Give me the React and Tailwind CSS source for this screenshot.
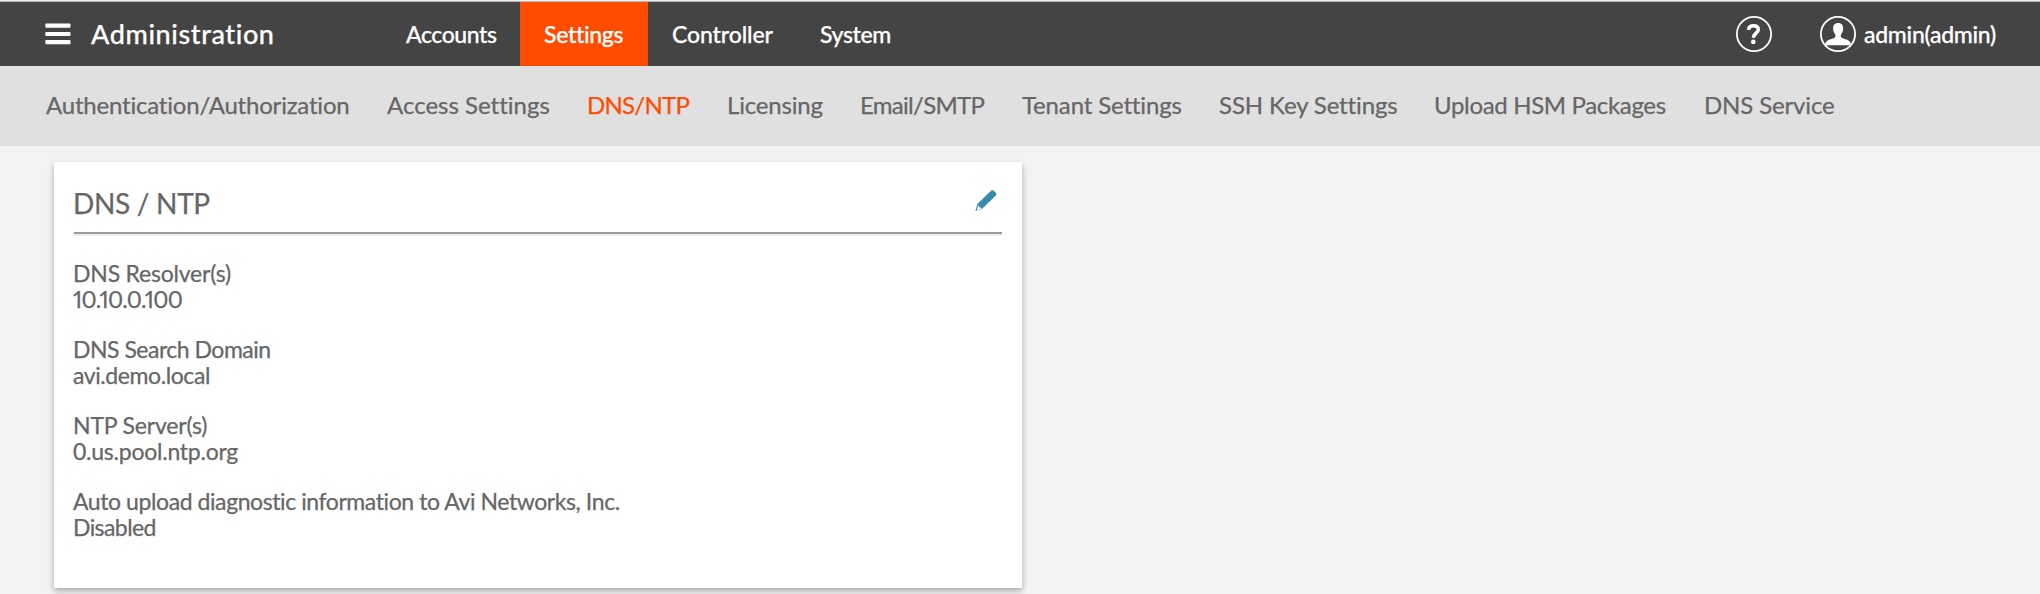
const navItems = [
  { label: "Accounts", className: "w-[138px] tracking-[-0.42px]" },
  { label: "Settings", className: "w-[128px] bg-[#ff4c00] tracking-[-0.3px]" },
  { label: "Controller", className: "w-[148px] tracking-[-0.1px]" },
  { label: "System", className: "tracking-[-0.36px]" },
];

const subNavItems = [
  { label: "Authentication/Authorization", className: "w-[341px] tracking-[-0.2px]" },
  { label: "Access Settings", className: "w-[200px] tracking-normal [font-variant-ligatures:none]" },
  { label: "DNS/NTP", className: "w-[140px] text-[#ff4c00] tracking-[-0.75px]" },
  { label: "Licensing", className: "w-[133px] tracking-[-0.18px]" },
  { label: "Email/SMTP", className: "w-[162px] tracking-[-0.72px]" },
  { label: "Tenant Settings", className: "w-[197px] tracking-[-0.15px]" },
  { label: "SSH Key Settings", className: "w-[215px] tracking-[-0.12px]" },
  { label: "Upload HSM Packages", className: "w-[270px] tracking-[-0.34px]" },
  { label: "DNS Service", className: "tracking-[-0.15px]" },
];

const fields = [
  {
    label: "DNS Resolver(s)",
    value: "10.10.0.100",
    labelClass: "tracking-[-0.21px]",
    valueClass: "proportional-nums tracking-[-0.65px]",
  },
  {
    label: "DNS Search Domain",
    value: "avi.demo.local",
    labelClass: "tracking-[-0.5px]",
    valueClass: "tracking-[-0.41px]",
  },
  {
    label: "NTP Server(s)",
    value: "0.us.pool.ntp.org",
    labelClass: "tracking-[-0.17px]",
    valueClass: "tracking-[-0.24px]",
  },
  {
    label: "Auto upload diagnostic information to Avi Networks, Inc.",
    value: "Disabled",
    labelClass: "tracking-[-0.42px]",
    valueClass: "tracking-[-0.58px]",
  },
];

function MenuIcon() {
  return (
    <svg className="h-[22px] w-[26px]" viewBox="0 0 26 22" fill="white">
      <rect x="0.3" y="0.6" width="25.2" height="4.2" rx="1" />
      <rect x="0.3" y="8.9" width="25.2" height="4.2" rx="1" />
      <rect x="0.3" y="17" width="25.2" height="4.2" rx="1" />
    </svg>
  );
}

function HelpIcon() {
  return (
    <svg className="h-9 w-9" viewBox="0 0 36 36" fill="none" stroke="white">
      <circle cx="18" cy="18" r="17.1" strokeWidth="1.8" />
      <path
        d="M12.6 13.8C12.8 10.9 14.8 9.7 17.5 9.7c2.9 0 4.8 1.4 4.8 3.9 0 3.5-4.8 3.8-4.8 8.1"
        strokeWidth="3.6"
      />
      <circle cx="17.3" cy="25.9" r="2.3" fill="white" stroke="none" />
    </svg>
  );
}

function UserIcon() {
  return (
    <svg className="h-9 w-9" viewBox="0 0 36 36">
      <circle cx="18" cy="18" r="17.1" fill="none" stroke="white" strokeWidth="1.8" />
      <path
        d="M18.2 6.9c3.3 0 5 2.2 5 5.4 0 3.2-1.2 4.7-2.1 6.2-.5.9-.4 2.3.3 2.9 1.5 1.5 8.4 1.5 9.5 6.2L30 29.2H6l-.8-1.6c1.2-4.7 8.2-4.7 9.7-6.2.7-.6.8-2 .3-2.9-.9-1.5-2.1-3-2.1-6.2 0-3.2 1.8-5.400 5.100-5.400z"
        fill="white"
      />
    </svg>
  );
}

function PencilIcon() {
  return (
    <svg className="h-[22px] w-[22px]" viewBox="0 0 22 22">
      <path
        d="M15.8.9a2.200 2.200 0 0 1 3.100 0l1.700 1.700a2.200 2.200 0 0 1 0 3.100L7.200 18.700.4 21l2-7z"
        fill="#3a8bab"
      />
      <path d="M3.3 14.8l.7 2.200 1.700.5.700 1.100-3.800 1.400-.6-.7z" fill="white" />
    </svg>
  );
}

export default function App() {
  return (
    <div className="flex h-[594px] w-[2040px] flex-col overflow-hidden whitespace-nowrap bg-[#f3f3f3] font-['Lato',sans-serif] text-[#666] [-webkit-text-stroke:0.25px]">
      <div className="h-[2px] shrink-0 border-b border-[#b5b9b9] bg-[#eee]" />
      <header className="flex h-16 shrink-0 items-stretch bg-[#444] text-[23px] font-medium text-white">
        <div className="flex w-[382px] items-center pl-[45px]">
          <MenuIcon />
          <h1 className="pl-5 text-[27px] font-medium tracking-[0.6px]">Administration</h1>
        </div>
        <nav className="flex">
          {navItems.map(({ label, className }) => (
            <a key={label} className={`flex items-center pl-6 ${className}`}>
              {label}
            </a>
          ))}
        </nav>
        <div className="ml-auto flex w-[304px] items-center">
          <HelpIcon />
          <div className="flex items-center pl-12">
            <UserIcon />
            <span className="pl-2 tracking-[-0.28px]">admin(admin)</span>
          </div>
        </div>
      </header>
      <nav className="flex h-20 shrink-0 items-center bg-[#e0e0e0] pb-[2px] pl-[46px] text-[24px]">
        {subNavItems.map(({ label, className }) => (
          <a key={label} className={className}>
            {label}
          </a>
        ))}
      </nav>
      <main className="pl-[54px] pt-4">
        <section className="h-[426px] w-[968px] bg-white px-5 shadow-[0_3px_6px_rgba(0,0,0,0.3)]">
          <div className="flex h-[70px] items-center justify-between pr-[5px]">
            <h2 className="-ml-px pt-3 text-[28px] leading-8 tracking-[-0.3px]">DNS / NTP</h2>
            <span className="pt-2">
              <PencilIcon />
            </span>
          </div>
          <div className="h-1 border-b-2 border-t-2 border-b-[#eee] border-t-[#999]" />
          <dl className="-ml-px flex flex-col gap-6 pt-6 text-[23px] leading-[26px]">
            {fields.map(({ label, value, labelClass, valueClass }) => (
              <div key={label}>
                <dt className={labelClass}>{label}</dt>
                <dd className={valueClass}>{value}</dd>
              </div>
            ))}
          </dl>
        </section>
      </main>
    </div>
  );
}
